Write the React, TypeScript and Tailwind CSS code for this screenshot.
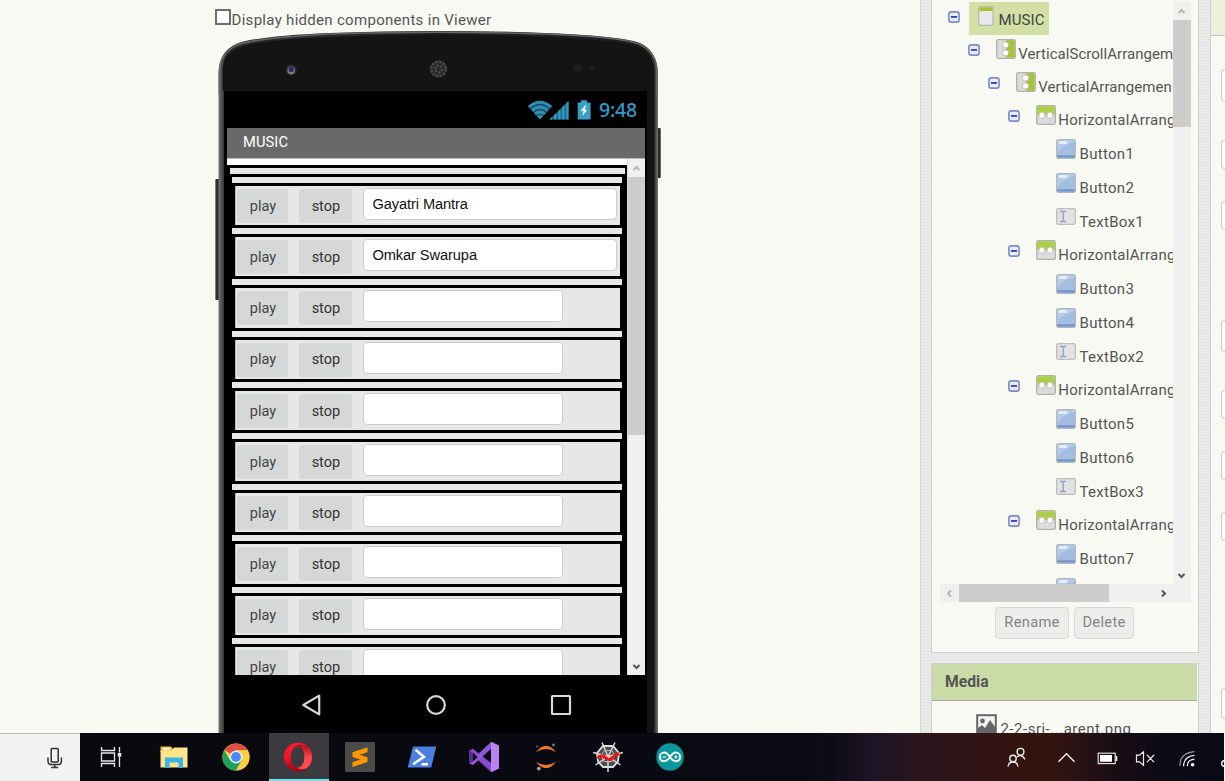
import React from "react";

type Kind = "screen" | "vert" | "horiz" | "button" | "textbox";
interface Node {
  label: string;
  kind: Kind;
  level: number;
}

const tree: Node[] = [
  { label: "MUSIC", kind: "screen", level: 0 },
  { label: "VerticalScrollArrangem", kind: "vert", level: 1 },
  { label: "VerticalArrangemen", kind: "vert", level: 2 },
  { label: "HorizontalArrang", kind: "horiz", level: 3 },
  { label: "Button1", kind: "button", level: 4 },
  { label: "Button2", kind: "button", level: 4 },
  { label: "TextBox1", kind: "textbox", level: 4 },
  { label: "HorizontalArrang", kind: "horiz", level: 3 },
  { label: "Button3", kind: "button", level: 4 },
  { label: "Button4", kind: "button", level: 4 },
  { label: "TextBox2", kind: "textbox", level: 4 },
  { label: "HorizontalArrang", kind: "horiz", level: 3 },
  { label: "Button5", kind: "button", level: 4 },
  { label: "Button6", kind: "button", level: 4 },
  { label: "TextBox3", kind: "textbox", level: 4 },
  { label: "HorizontalArrang", kind: "horiz", level: 3 },
  { label: "Button7", kind: "button", level: 4 },
  { label: "", kind: "button", level: 4 },
];

const indents = ["pl-[9px]", "pl-[28px]", "pl-[48px]", "pl-[68px]", "pl-[88px]"];

const rows = ["Gayatri Mantra", "Omkar Swarupa", "", "", "", "", "", "", "", ""];

function Toggle() {
  return (
    <svg width="12" height="12" viewBox="0 0 12 12" className="mt-[9px] shrink-0">
      <rect x="0.9" y="0.9" width="10.2" height="10.2" rx="2.4" fill="#e8ecf9" stroke="#7b8cc6" strokeWidth="1.6" />
      <rect x="3" y="5.2" width="6" height="1.5" fill="#1414c8" />
    </svg>
  );
}

function ScreenIcon() {
  return (
    <svg width="16" height="20" viewBox="0 0 16 20" className="shrink-0">
      <rect x="0.7" y="0.7" width="14.3" height="18.6" rx="2" fill="#e9e9e9" stroke="#b9b9b9" strokeWidth="1.3" />
      <path d="M1.2 5V2.2Q1.2 1.2 2.2 1.2H13.5Q14.5 1.2 14.5 2.2V5Z" fill="#a9c32f" />
    </svg>
  );
}

function VertIcon() {
  return (
    <svg width="20" height="20" viewBox="0 0 20 20" className="shrink-0">
      <rect x="0.7" y="0.7" width="18.6" height="18.6" rx="1.5" fill="#dcdcdc" stroke="#b0b0b0" strokeWidth="1.3" />
      <path d="M10 1.3H18.6V18.7H10Z" fill="#a5c43a" />
      <rect x="6.6" y="3.2" width="6" height="5.6" rx="2" fill="#fff" stroke="#b5b5b5" strokeWidth="0.8" />
      <rect x="6.6" y="11.2" width="6" height="5.6" rx="2" fill="#fff" stroke="#b5b5b5" strokeWidth="0.8" />
    </svg>
  );
}

function HorizIcon() {
  return (
    <svg width="20" height="20" viewBox="0 0 20 20" className="shrink-0">
      <rect x="0.7" y="0.7" width="18.6" height="18.6" rx="1.5" fill="#dcdcdc" stroke="#b0b0b0" strokeWidth="1.3" />
      <path d="M1.3 1.3H18.7V10H1.3Z" fill="#abcf45" />
      <rect x="3" y="7.2" width="5.6" height="6" rx="2" fill="#fff" stroke="#b5b5b5" strokeWidth="0.8" />
      <rect x="11.2" y="7.2" width="5.6" height="6" rx="2" fill="#fff" stroke="#b5b5b5" strokeWidth="0.8" />
    </svg>
  );
}

function ButtonIcon() {
  return (
    <svg width="20" height="20" viewBox="0 0 20 20" className="shrink-0">
      <rect x="0.7" y="0.7" width="18.6" height="18.6" rx="1.5" fill="#a3bee2" stroke="#b3b6ba" strokeWidth="1.3" />
      <path d="M1.3 14Q7 5 18.7 3V1.3H1.3Z" fill="#b4cbe8" />
      <rect x="1.3" y="16.3" width="17.4" height="2.2" fill="#6f93c8" />
      <rect x="2.6" y="2" width="9" height="3" rx="1.5" fill="#e3edf8" />
    </svg>
  );
}

function TextBoxIcon() {
  return (
    <svg width="20" height="17" viewBox="0 0 20 17" className="shrink-0">
      <rect x="0.7" y="0.7" width="18.6" height="15.6" rx="1.5" fill="#e2e2e2" stroke="#bdbdbd" strokeWidth="1.3" />
      <path d="M4 3.5H6.5L7.2 4.2L8 3.5H10M7.2 4V13M4 13.5H6.5L7.2 12.8L8 13.5H10" fill="none" stroke="#8fa3c0" strokeWidth="1.3" />
    </svg>
  );
}

function TreeRow({ node }: { node: Node }) {
  if (node.kind === "screen") {
    return (
      <div className="flex h-[33px] shrink-0 items-start pl-[8px]">
        <Toggle />
        <div className="ml-[9px] flex h-[33px] w-[80px] bg-[#d2e0a6] pt-[4px] pl-[9px]">
          <ScreenIcon />
          <span className="mt-[3px] ml-[5px] text-[15px] leading-[22px] tracking-[0.1px] text-[#444]">{node.label}</span>
        </div>
      </div>
    );
  }
  const leaf = node.kind === "button" || node.kind === "textbox";
  return (
    <div className={`flex shrink-0 items-start ${indents[node.level]} ${leaf ? "h-[34px]" : "h-[33px]"}`}>
      {leaf ? <span className="w-[12px] shrink-0" /> : <Toggle />}
      <span className={`ml-[16.4px] shrink-0 ${node.kind === "textbox" ? "pt-[6px]" : node.kind === "button" ? "pt-[5px]" : "pt-[4px]"}`}>
        {node.kind === "vert" && <VertIcon />}
        {node.kind === "horiz" && <HorizIcon />}
        {node.kind === "button" && <ButtonIcon />}
        {node.kind === "textbox" && <TextBoxIcon />}
      </span>
      <span
        className={`text-[15px] leading-[22px] whitespace-nowrap text-[#555] ${
          leaf
            ? "mt-[9px] ml-[3.6px] tracking-[0.3px]"
            : node.kind === "vert"
              ? "mt-[8px] ml-[2.4px] tracking-[0.04px]"
              : "mt-[8px] ml-[2.4px] tracking-[0.25px]"
        }`}
      >
        {node.label}
      </span>
    </div>
  );
}

function Chevron({ dir, color }: { dir: "up" | "down" | "left" | "right"; color: string }) {
  const d = {
    up: "M1.5 6L4.5 3L7.5 6",
    down: "M1.5 3L4.5 6L7.5 3",
    left: "M6 1.5L3 4.5L6 7.5",
    right: "M3 1.5L6 4.5L3 7.5",
  }[dir];
  return (
    <svg width="9" height="9" viewBox="0 0 9 9">
      <path d={d} fill="none" stroke={color} strokeWidth="2" />
    </svg>
  );
}

function PhoneFrame() {
  return (
    <svg className="absolute top-0 left-0" width="450" height="703" viewBox="215 30 450 703">
      <defs>
        <linearGradient id="edge" x1="0" x2="1">
          <stop offset="0" stopColor="#777" />
          <stop offset="0.008" stopColor="#4a4a4a" />
          <stop offset="0.016" stopColor="#2c2c2c" />
          <stop offset="0.98" stopColor="#1c1c1c" />
          <stop offset="0.992" stopColor="#2e2e2e" />
          <stop offset="1" stopColor="#777" />
        </linearGradient>
      </defs>
      <rect x="215.4" y="179" width="5" height="121" rx="1" fill="#2e2e2e" />
      <rect x="656" y="128" width="4.7" height="50" rx="1" fill="#2a2a2a" />
      <path d="M218.5 733V72Q219 52 236 44Q256 36 330 33Q380 31 437 31Q495 31 545 33Q621 36 640 43Q657 51 658 72V733Z" fill="url(#edge)" />
      <path d="M219.4 95V72Q220 53 237 45Q256 38 330 34Q380 32.2 437 32.2Q495 32.2 545 34Q621 37 639 44Q656.4 52 657 72V95" fill="none" stroke="#666" strokeWidth="1.6" />
      <path d="M222.5 91V70Q223 54 238 48Q257 40 330 37Q380 34.5 437 34.5Q495 34.5 545 37Q619 40 637 47Q653 54 654 70V91V733H646V91Z" fill="#141414" />
      <circle cx="291.2" cy="70" r="5.6" fill="#2c2c2e" />
      <circle cx="291.2" cy="70.6" r="3.8" fill="#77777c" />
      <circle cx="291.2" cy="69.4" r="2.6" fill="#2a2a78" />
      <circle cx="438.5" cy="69" r="9" fill="#262626" />
      <circle cx="438.5" cy="69" r="7.2" fill="none" stroke="#484848" strokeWidth="2.4" strokeDasharray="2.6 1.2" />
      <circle cx="438.5" cy="69" r="3.4" fill="none" stroke="#484848" strokeWidth="2.4" strokeDasharray="2.4 1" />
      <circle cx="577.5" cy="68.5" r="3.8" fill="#1f1f1f" />
      <circle cx="592" cy="68.5" r="2.4" fill="#1f1f1f" />
    </svg>
  );
}

function StatusBar() {
  return (
    <div className="flex h-[37px] items-center justify-end pr-[10px]">
      <svg width="66" height="22" viewBox="527 98 66 22">
        <path d="M528 105.5Q540 95 552 105.5L540 118.4Z" fill="#175068" />
        <g fill="none" stroke="#2f8fb8" strokeWidth="2.9">
          <path d="M528.8 106Q540 96.5 551.2 106" />
          <path d="M532 109.6Q540 102.6 548 109.6" />
          <path d="M535 113Q540 108.8 545 113" />
        </g>
        <path d="M537 115Q540 112.8 543 115L540 118.4Z" fill="#2f8fb8" />
        <path d="M549.5 118.6L568.5 100V118.6Z" fill="#1f6d90" />
        <path d="M550 118.6V118L552 116V118.6ZM554 118.6V114L556.2 112V118.6ZM558.3 118.6V110L560.4 108V118.6ZM562.3 118.6V106L564.5 104V118.6ZM566.4 118.6V102L568.5 100V118.6Z" fill="#3499c4" />
        <path d="M577.7 118.6V101.5H581V99.3H587V101.5H590.6V118.6Z" fill="#3a9fc8" />
        <path d="M585.5 104L580.5 110H583.5L582.3 115L587.3 108.7H584.6L586.3 104Z" fill="#fff" />
      </svg>
      <span className="ml-[6px] w-[38px] font-['Noto_Sans'] text-[19.5px] leading-none font-medium tracking-[-0.2px] text-[#319dca]">9:48</span>
    </div>
  );
}

function MusicRow({ text, wide }: { text: string; wide: boolean }) {
  return (
    <>
      <div className="mr-[7px] ml-[8px] flex h-[39.2px] shrink-0 items-start border-l border-[#bbb] bg-[#e7e7e7]">
        <div className="mt-[3px] ml-[1.4px] flex h-[34px] w-[51px] items-center justify-center rounded-[2px] bg-[#d5d8d7] pt-[1.5px] text-[14.5px] text-[#444]">play</div>
        <div className="mt-[3px] ml-[11px] flex h-[34px] w-[53px] items-center justify-center rounded-[2px] bg-[#d5d8d7] pt-[1.5px] text-[14.5px] text-[#333]">stop</div>
        <div
          className={`mt-[2px] ml-[11px] flex h-[32px] items-center rounded-[4px] border border-[#ccc] bg-white pl-[8px] font-['Liberation_Sans',sans-serif] text-[14.67px] tracking-[-0.1px] text-[#111] ${
            wide ? "w-[254px]" : "w-[200px]"
          }`}
        >
          {text}
        </div>
      </div>
      <div className="mr-[5px] ml-[5px] my-[3px] h-[6px] shrink-0 bg-[#e7e7e7]" />
    </>
  );
}

function Phone() {
  return (
    <div className="relative ml-[215px] h-[703px] w-[450px] shrink-0">
      <PhoneFrame />
      <div className="relative flex h-full flex-col pt-[61px]">
        <div className="ml-[9px] flex w-[423px] grow flex-col bg-black">
          <StatusBar />
          <div className="ml-[3px] flex h-[30px] w-[418px] items-center bg-[#696969] pb-[2px] pl-[16px] text-[14.67px] tracking-[0.1px] text-white">MUSIC</div>
          <div className="ml-[3px] flex h-[517px] w-[418px] border-t border-[#bbb] bg-white">
            <div className="flex w-[400px] shrink-0 flex-col overflow-hidden pt-[6px]">
              <div className="flex h-[510px] shrink-0 flex-col overflow-hidden bg-black pt-[3px]">
                <div className="mr-[2px] ml-[3px] h-[6px] shrink-0 bg-[#e7e7e7]" />
                <div className="mx-[5px] my-[3px] h-[6px] shrink-0 bg-[#e7e7e7]" />
                {rows.map((r, i) => (
                  <MusicRow key={i} text={r} wide={i < 2} />
                ))}
              </div>
            </div>
            <div className="flex w-[18px] flex-col items-center border-l border-[#dfe0b8] bg-[#f0f0f0]">
              <div className="flex h-[18px] items-center">
                <Chevron dir="up" color="#b8b8b8" />
              </div>
              <div className="h-[258px] w-full bg-[#cdcdcd]" />
              <div className="mt-auto flex h-[18px] items-center">
                <Chevron dir="down" color="#555" />
              </div>
            </div>
          </div>
          <svg width="422" height="58" viewBox="224 675 422 58">
            <g fill="none" stroke="#d8d8d8" strokeWidth="2.2" strokeLinejoin="round">
              <path d="M303.3 705L319.2 695.6V714.4Z" />
              <circle cx="436" cy="705" r="8.8" />
              <rect x="552" y="696" width="18" height="18" rx="0.5" />
            </g>
          </svg>
        </div>
      </div>
    </div>
  );
}

function Components() {
  return (
    <div className="flex h-[653px] flex-col border-x border-b border-[#cfcfcf] bg-[#f8f9f3]">
      <div className="ml-[7.5px] flex h-[602px] w-[251px] shrink-0 flex-col">
        <div className="flex h-[584px]">
          <div className="flex w-[233px] flex-col overflow-hidden pt-[2px]">
            {tree.map((n, i) => (
              <TreeRow key={i} node={n} />
            ))}
          </div>
          <div className="mt-[2px] flex w-[18px] flex-col items-center bg-[#f0f0f0]">
            <div className="flex h-[18px] items-center">
              <Chevron dir="up" color="#b8b8b8" />
            </div>
            <div className="h-[107px] w-full bg-[#cdcdcd]" />
            <div className="mt-auto flex h-[18px] items-center">
              <Chevron dir="down" color="#555" />
            </div>
          </div>
        </div>
        <div className="flex h-[18px] items-center bg-[#f0f0f0]">
          <div className="flex w-[19px] justify-center">
            <Chevron dir="left" color="#b8b8b8" />
          </div>
          <div className="h-full w-[150px] bg-[#cdcdcd]" />
          <div className="ml-[50.5px]">
            <Chevron dir="right" color="#555" />
          </div>
        </div>
      </div>
      <div className="mt-[5px] ml-[63px] flex gap-[5px] text-[14.67px] text-[#858585]">
        <div className="flex h-[32px] w-[74px] items-center justify-center rounded-[4px] border border-[#d8d8d8] bg-[#ededec] pb-[2px] tracking-[0.3px]">Rename</div>
        <div className="flex h-[32px] w-[60px] items-center justify-center rounded-[4px] border border-[#d8d8d8] bg-[#ededec] pb-[2px] tracking-[0.3px]">Delete</div>
      </div>
    </div>
  );
}

function Media() {
  return (
    <div className="mt-[10px] flex h-[70px] flex-col overflow-hidden border border-b-0 border-[#cfcfcf] bg-[#f8f9f3]">
      <div className="flex h-[37px] w-[265px] shrink-0 items-center border-b border-[#a9a9a9] bg-[#cbdba7] pl-[13px] text-[15.7px] font-bold text-[#555]">Media</div>
      <div className="flex items-start pl-[43.5px]">
        <svg width="21" height="21" viewBox="0 0 21 21" className="mt-[13px] shrink-0">
          <rect x="1.2" y="1.2" width="18.6" height="20" fill="#f4f4f4" stroke="#666" strokeWidth="2" />
          <circle cx="6.5" cy="7" r="2.4" fill="#666" />
          <path d="M2 19.5V14L6 11L9 14L14 6L19 13V19.5Z" fill="#666" />
        </svg>
        <span className="mt-[17px] ml-[4px] text-[15px] leading-[22px] tracking-[0.5px] whitespace-pre text-[#555]">2-2-sri-...arent.png</span>
      </div>
    </div>
  );
}

function Properties() {
  return (
    <div className="flex w-[15px] flex-col items-end overflow-hidden border-l border-[#cfcfcf] bg-[#f8f9f3]">
      <div className="h-[36px] w-full shrink-0 border-b border-[#c4c4c4] bg-[#ebefdb]" />
      <div className="mt-[33px] h-[33px] w-[4px] shrink-0 rounded-l-[4px] border border-r-0 border-[#ccc] bg-white" />
      <div className="mt-[38px] h-[29px] w-[4px] shrink-0 rounded-l-[4px] border border-r-0 border-[#ccc] bg-white" />
      <div className="mt-[32px] h-[29px] w-[4px] shrink-0 rounded-l-[4px] border border-r-0 border-[#ccc] bg-white" />
      <div className="mt-[90px] h-[32px] w-[4px] shrink-0 rounded-l-[4px] border border-r-0 border-[#ccc] bg-white" />
      <div className="mt-[38px] h-[29px] w-[4px] shrink-0 rounded-l-[4px] border border-r-0 border-[#ccc] bg-white" />
      <div className="mt-[32px] h-[29px] w-[4px] shrink-0 rounded-l-[4px] border border-r-0 border-[#ccc] bg-white" />
      <div className="mt-[32px] h-[29px] w-[4px] shrink-0 rounded-l-[4px] border border-r-0 border-[#ccc] bg-white" />
      <div className="mt-[147px] h-[31px] w-[4px] shrink-0 rounded-l-[4px] border border-r-0 border-[#ccc] bg-white" />
    </div>
  );
}

function TaskButton({ children, active }: { children: React.ReactNode; active?: boolean }) {
  return (
    <div className="flex w-[62px] shrink-0 pl-[1.5px]">
      <div className={`flex w-full items-center justify-center pr-[2px] ${active ? "border-b-2 border-[#76e4ec] bg-[#3b3b3f] pt-[2px]" : ""}`}>{children}</div>
    </div>
  );
}

function Taskbar() {
  return (
    <div className="flex h-[48px] w-[1224px] bg-[linear-gradient(90deg,#08080c_0%,#0a0a14_66%,#0f0c18_68%,#1b1324_71%,#2a151c_75%,#2e1517_79%,#35130f_83%,#35130f_86%,#2a1215_88%,#1a0e14_91%,#0e0b16_94%,#080a16_100%)]">
      <div className="flex w-[80px] shrink-0 items-center border-t border-[#b8b8b8] bg-[#f2f2f2] pl-[47px]">
        <svg width="16" height="22" viewBox="0 0 16 22" fill="none" stroke="#333" strokeWidth="1.5">
          <rect x="4.2" y="1.5" width="7" height="13.5" rx="0.8" />
          <path d="M1 10.5V14Q1 17.6 4.5 17.6H11Q14.4 17.6 14.4 14V10.5M7.7 17.6V20.4M4.2 20.6H11.2" />
        </svg>
      </div>
      <div className="flex w-[63px] shrink-0 items-center justify-center pr-[2px]">
        <svg width="22" height="20" viewBox="0 0 22 20" fill="none" stroke="#e8e8e8" strokeWidth="1.3">
          <path d="M1.5 0V3.5H14.5V0M1.5 20V16.5H14.5V20M1.5 6H14.5V14H1.5ZM19.5 0V5.5M19.5 9.5V20" />
          <rect x="18.4" y="6.6" width="2.2" height="2.4" fill="#fff" />
        </svg>
      </div>
      <TaskButton>
        <svg width="28" height="24" viewBox="0 0 28 24">
          <path d="M0.5 1.5H11L13 3.8V7H0.5Z" fill="#f5bd24" />
          <rect x="3" y="2.8" width="7" height="2" fill="#fff" />
          <path d="M0.5 5.5H12L14 2.6H27.5V22.5H0.5Z" fill="#ffe28c" />
          <path d="M5 23V12.5H23V23H18.5V17.5H9.5V23Z" fill="#3cb4e6" />
        </svg>
      </TaskButton>
      <TaskButton>
        <svg width="28" height="28" viewBox="0 0 28 28">
          <circle cx="14" cy="14" r="13.6" fill="#ffcd40" />
          <path d="M14 14L2.3 7.1A13.6 13.6 0 0 1 25.8 7.3H14Z" fill="#dd5144" />
          <path d="M2.2 7.2A13.6 13.6 0 0 0 13.9 27.6L19.8 17.4L8.2 17.4Z" fill="#1fa15d" />
          <path d="M14 7.3H25.8A13.6 13.6 0 0 1 13.9 27.6L20 17Z" fill="#ffcd40" />
          <circle cx="14" cy="14" r="6.4" fill="#f1f1f1" />
          <circle cx="14" cy="14" r="5" fill="#4c8bf5" />
        </svg>
      </TaskButton>
      <TaskButton active>
        <svg width="30" height="30" viewBox="0 0 30 30">
          <defs>
            <linearGradient id="opera" x1="0" y1="0" x2="0" y2="1">
              <stop offset="0" stopColor="#ff1b2d" />
              <stop offset="0.5" stopColor="#ee1628" />
              <stop offset="1" stopColor="#a70014" />
            </linearGradient>
            <linearGradient id="operaRight" x1="0" y1="0" x2="0" y2="1">
              <stop offset="0" stopColor="#b00c1c" />
              <stop offset="0.55" stopColor="#ff4b4b" />
              <stop offset="1" stopColor="#ff4b4b" />
            </linearGradient>
          </defs>
          <circle cx="15" cy="15" r="14.2" fill="url(#opera)" />
          <path d="M11 5Q16 1.6 20.5 3L24.5 4.6A14.2 14.2 0 0 1 24.5 25.4Q20 28.6 14 26Z" fill="url(#operaRight)" />
          <ellipse cx="14.6" cy="15" rx="6.8" ry="10.8" fill="#3b3b3f" />
        </svg>
      </TaskButton>
      <TaskButton>
        <svg width="30" height="30" viewBox="0 0 30 30">
          <rect width="30" height="30" rx="1.5" fill="#4a4a4a" />
          <path d="M7.5 10.2L22.5 5.3V10.2L14.5 12.8L22.5 15.3V20L7.5 25V20L15.5 17.4L7.5 15Z" fill="#ff9800" />
        </svg>
      </TaskButton>
      <TaskButton>
        <svg width="30" height="22" viewBox="0 0 30 22">
          <path d="M6 0.5H29.3L24.2 21.5H0.7Z" fill="#4b7fe0" />
          <path d="M8.5 3.8L17 10.8L6 18.2M14.5 18.2H21" fill="none" stroke="#fff" strokeWidth="2.4" />
        </svg>
      </TaskButton>
      <TaskButton>
        <svg width="32" height="32" viewBox="0 0 32 32">
          <path d="M1.5 9.5L4.8 7.8L25 23.5L23 31L1.5 11Z" fill="#8a4ccf" />
          <path d="M1.5 9V22.5L4.8 24.2L23 8V1L9 14Z" fill="#9055d8" />
          <path d="M1.5 9.5L4.8 11.5V20.5L1.5 22.5Z" fill="#5c2d91" />
          <path d="M4.8 11.5L9.5 16L4.8 20.5Z" fill="#0b0b12" />
          <path d="M23 10.5V21.5L16 16Z" fill="#0b0b12" />
          <path d="M23 0.8L31 4.5V27.5L23 31.2Z" fill="#b983f3" />
        </svg>
      </TaskButton>
      <TaskButton>
        <svg width="24" height="28" viewBox="0 0 24 28">
          <path d="M2 9.2Q12 -3.6 22 9.2Q12 3 2 9.2Z" fill="#f37726" />
          <path d="M2 18.8Q12 31.6 22 18.8Q12 25 2 18.8Z" fill="#f37726" />
          <circle cx="19.5" cy="2" r="1.4" fill="#777" />
          <circle cx="3" cy="3.6" r="0.9" fill="#777" />
          <circle cx="4.8" cy="25.6" r="1.9" fill="#a5a5a5" />
        </svg>
      </TaskButton>
      <TaskButton>
        <svg width="32" height="32" viewBox="0 0 32 32" fill="none">
          <path d="M11 5H21L27 12L26 20.5L21 26H11L6 20.5L5 12Z" fill="#4c4c4c" stroke="#dedede" strokeWidth="1.8" />
          <path d="M16 15.5L10 1.5M16 15.5L23 1.5M16 15.5L31 11.5M16 15.5L28.5 24M16 15.5V31M16 15.5L3.5 24M16 15.5L1 11.5" stroke="#d8d8d8" strokeWidth="1.5" />
          <path d="M12.5 9.5H19.8L23 14.5L20 20.5H12L9 14.5Z" stroke="#bbb" strokeWidth="1" />
          <path d="M5.5 17.5Q9.5 12.5 13.5 16.5T21 16.5Q23.5 12.5 27.5 13" stroke="#f01414" strokeWidth="3" />
        </svg>
      </TaskButton>
      <TaskButton>
        <svg width="28" height="28" viewBox="0 0 28 28">
          <circle cx="14" cy="14" r="13.7" fill="#0a979d" />
          <path d="M14 14C11.5 10.4 9.8 9.6 8.2 9.6A4.2 4.2 0 0 0 8.2 18.2C9.8 18.2 11.5 17.4 14 14C16.5 10.4 18.2 9.6 19.8 9.6A4.2 4.2 0 0 1 19.8 18.2C18.2 18.2 16.5 17.4 14 14Z" fill="none" stroke="#fff" strokeWidth="2" />
          <path d="M6.5 14H10M18.2 14H21.6M19.9 12.3V15.7" stroke="#fff" strokeWidth="1.1" />
        </svg>
      </TaskButton>
      <svg className="ml-auto shrink-0" width="224" height="48" viewBox="1000 733 224 48" fill="none" stroke="#f0f0f0" strokeWidth="1.4">
        <circle cx="1013" cy="758.4" r="3.2" />
        <path d="M1008 766.5Q1008.6 762 1013 762T1018 766.5" />
        <circle cx="1020.5" cy="751.8" r="3.4" />
        <path d="M1017 757Q1018 755.6 1020.5 755.6T1025 759.5" />
        <path d="M1058.5 761.8L1066.5 753.8L1074.5 761.8" />
        <rect x="1098.2" y="753.2" width="17" height="10.4" strokeWidth="1.1" />
        <rect x="1100" y="755" width="12" height="6.8" fill="#fff" stroke="none" />
        <path d="M1116.5 756V761" strokeWidth="1.6" />
        <path d="M1136.5 755.2H1139.5L1143.5 751.7V765.3L1139.5 761.8H1136.5ZM1147 755L1154 762.2M1154 755L1147 762.2" strokeWidth="1.2" />
        <g strokeWidth="1.2">
          <path d="M1180 766Q1179.5 753 1194.5 751.6" stroke="#9a9a9a" />
          <path d="M1183.6 766.3Q1183.5 756.5 1194.5 755.4" />
          <path d="M1187.3 766.3Q1187.4 760 1194.5 759.2" />
        </g>
        <circle cx="1192.6" cy="764.8" r="1.8" fill="#fff" stroke="none" />
        <circle cx="1224.5" cy="763.5" r="2.8" />
      </svg>
    </div>
  );
}

export default function App() {
  return (
    <div className="flex h-[781px] w-[1225px] flex-col overflow-hidden bg-[#f8f9f3] font-['Roboto',sans-serif]">
      <div className="flex h-[733px] overflow-hidden">
        <div className="flex w-[920px] shrink-0 flex-col">
          <div className="flex h-[30px] shrink-0 items-start pl-[215px]">
            <span className="mt-[9px] h-[16px] w-[16px] border-[2px] border-[#6f6f6f] bg-white" />
            <span className="mt-[9px] ml-[0.5px] text-[15px] leading-[22px] tracking-[0.3px] whitespace-nowrap text-[#555]">Display hidden components in Viewer</span>
          </div>
          <Phone />
        </div>
        <div className="flex w-[290px] shrink-0 flex-col border-l border-[#d6d6d6] bg-[#e7e7e8] bg-[repeating-linear-gradient(0deg,#e3e3e4_0px,#e3e3e4_1px,#eaeaeb_1px,#eaeaeb_3px)] pr-[11px] pl-[10px]">
          <Components />
          <Media />
        </div>
        <Properties />
      </div>
      <Taskbar />
    </div>
  );
}
